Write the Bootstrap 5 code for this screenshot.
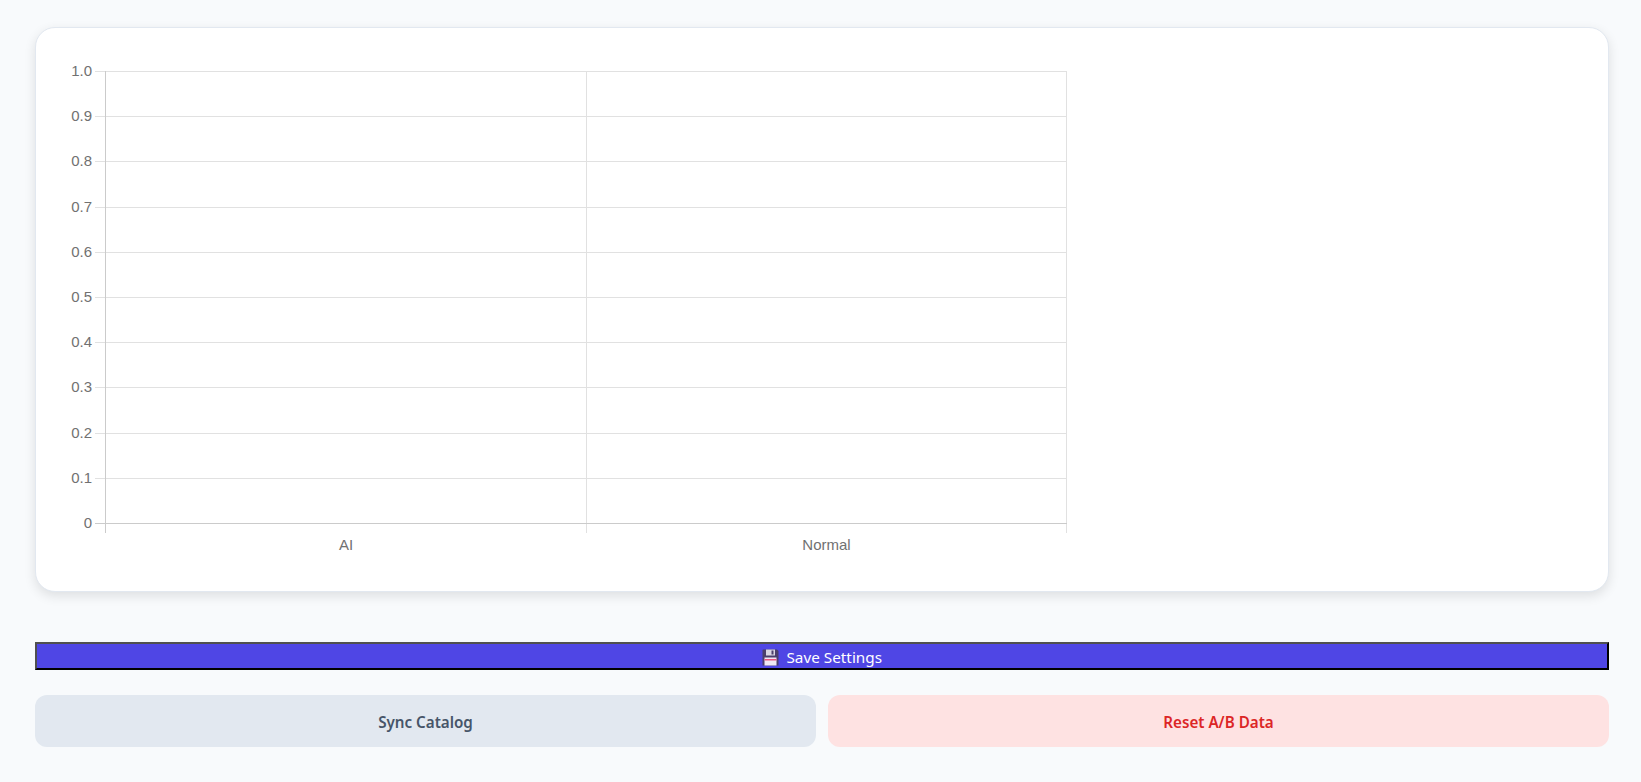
<!DOCTYPE html>
<html lang="en">
<head>
<meta charset="utf-8">
<title>Settings</title>
<link href="https://cdn.jsdelivr.net/npm/bootstrap@5.3.0/dist/css/bootstrap.min.css" rel="stylesheet">
<style>
html, body { height: 100%; }
body { background: #f8fafc; font-family: "Noto Sans", "Open Sans", sans-serif; overflow: hidden; }
.page-wrap { padding: 27px 32px 0 35px; }
.chart-panel { height: 565px; background: #fff; border: 1px solid #e2e8f0; border-radius: 20px; box-shadow: 0 4px 12px rgba(0,0,0,.11); margin-bottom: 50px; overflow: hidden; }
.chart-svg { display: block; }
.chart-svg text { font-family: "Liberation Sans", Arial, sans-serif; font-size: 15px; fill: #717171; }
.save-btn { display: block; width: 100%; height: 28px; padding: 0; line-height: 26px; background: #4f46e5; color: #fff; font-size: 15.3px; border: 2px solid; border-color: #505050 #000 #000 #505050; border-radius: 0; margin-bottom: 25px; }
.save-btn svg { vertical-align: -3px; margin-right: 7.5px; }
.action-row { gap: 12px; }
.action-btn { height: 52px; border: 0; border-radius: 12px; font-weight: 600; font-size: 15.2px; flex: 1 1 0; padding-top: 8px; }
.sync-btn { background: #e2e8f0; color: #475569; }
.reset-btn { background: #fee2e2; color: #dc2626; }
</style>
</head>
<body>
<div class="page-wrap">
  <div class="chart-panel">
    <svg class="chart-svg" width="1100" height="563" viewBox="36 28 1100 563" xmlns="http://www.w3.org/2000/svg">
      <g stroke="#e1e1e1" stroke-width="1" fill="none">
        <path d="M95 71.5H1067M95 116.5H1067M95 161.5H1067M95 207.5H1067M95 252.5H1067M95 297.5H1067M95 342.5H1067M95 387.5H1067M95 433.5H1067M95 478.5H1067"/>
        <path d="M586.5 71V533M1066.5 71V533"/>
      </g>
      <g stroke="#cbcbcb" stroke-width="1" fill="none">
        <path d="M95 523.5H1067"/>
        <path d="M105.5 71V533"/>
      </g>
      <g text-anchor="end">
        <text x="92" y="76">1.0</text>
        <text x="92" y="121">0.9</text>
        <text x="92" y="166">0.8</text>
        <text x="92" y="212">0.7</text>
        <text x="92" y="257">0.6</text>
        <text x="92" y="302">0.5</text>
        <text x="92" y="347">0.4</text>
        <text x="92" y="392">0.3</text>
        <text x="92" y="438">0.2</text>
        <text x="92" y="483">0.1</text>
        <text x="92" y="528">0</text>
      </g>
      <g text-anchor="middle">
        <text x="346" y="550">AI</text>
        <text x="826.5" y="550">Normal</text>
      </g>
    </svg>
  </div>
  <button type="button" class="btn save-btn">
    <svg width="17" height="17" viewBox="0 0 17 17" xmlns="http://www.w3.org/2000/svg" aria-hidden="true"><path d="M1 0.5H15L16.5 2V16.5H0.5V1Z" fill="#4b3f6b"/><rect x="4" y="0.5" width="9" height="6" fill="#d9d6e3"/><rect x="9.5" y="1.5" width="2" height="4" fill="#4b3f6b"/><rect x="2.5" y="8.5" width="12" height="8" fill="#efe8f4"/><rect x="2.5" y="10" width="12" height="1.5" fill="#e8547f"/></svg>Save Settings
  </button>
  <div class="d-flex action-row">
    <button type="button" class="btn action-btn sync-btn">Sync Catalog</button>
    <button type="button" class="btn action-btn reset-btn">Reset A/B Data</button>
  </div>
</div>
<script src="https://cdn.jsdelivr.net/npm/bootstrap@5.3.0/dist/js/bootstrap.bundle.min.js"></script>
</body>
</html>
